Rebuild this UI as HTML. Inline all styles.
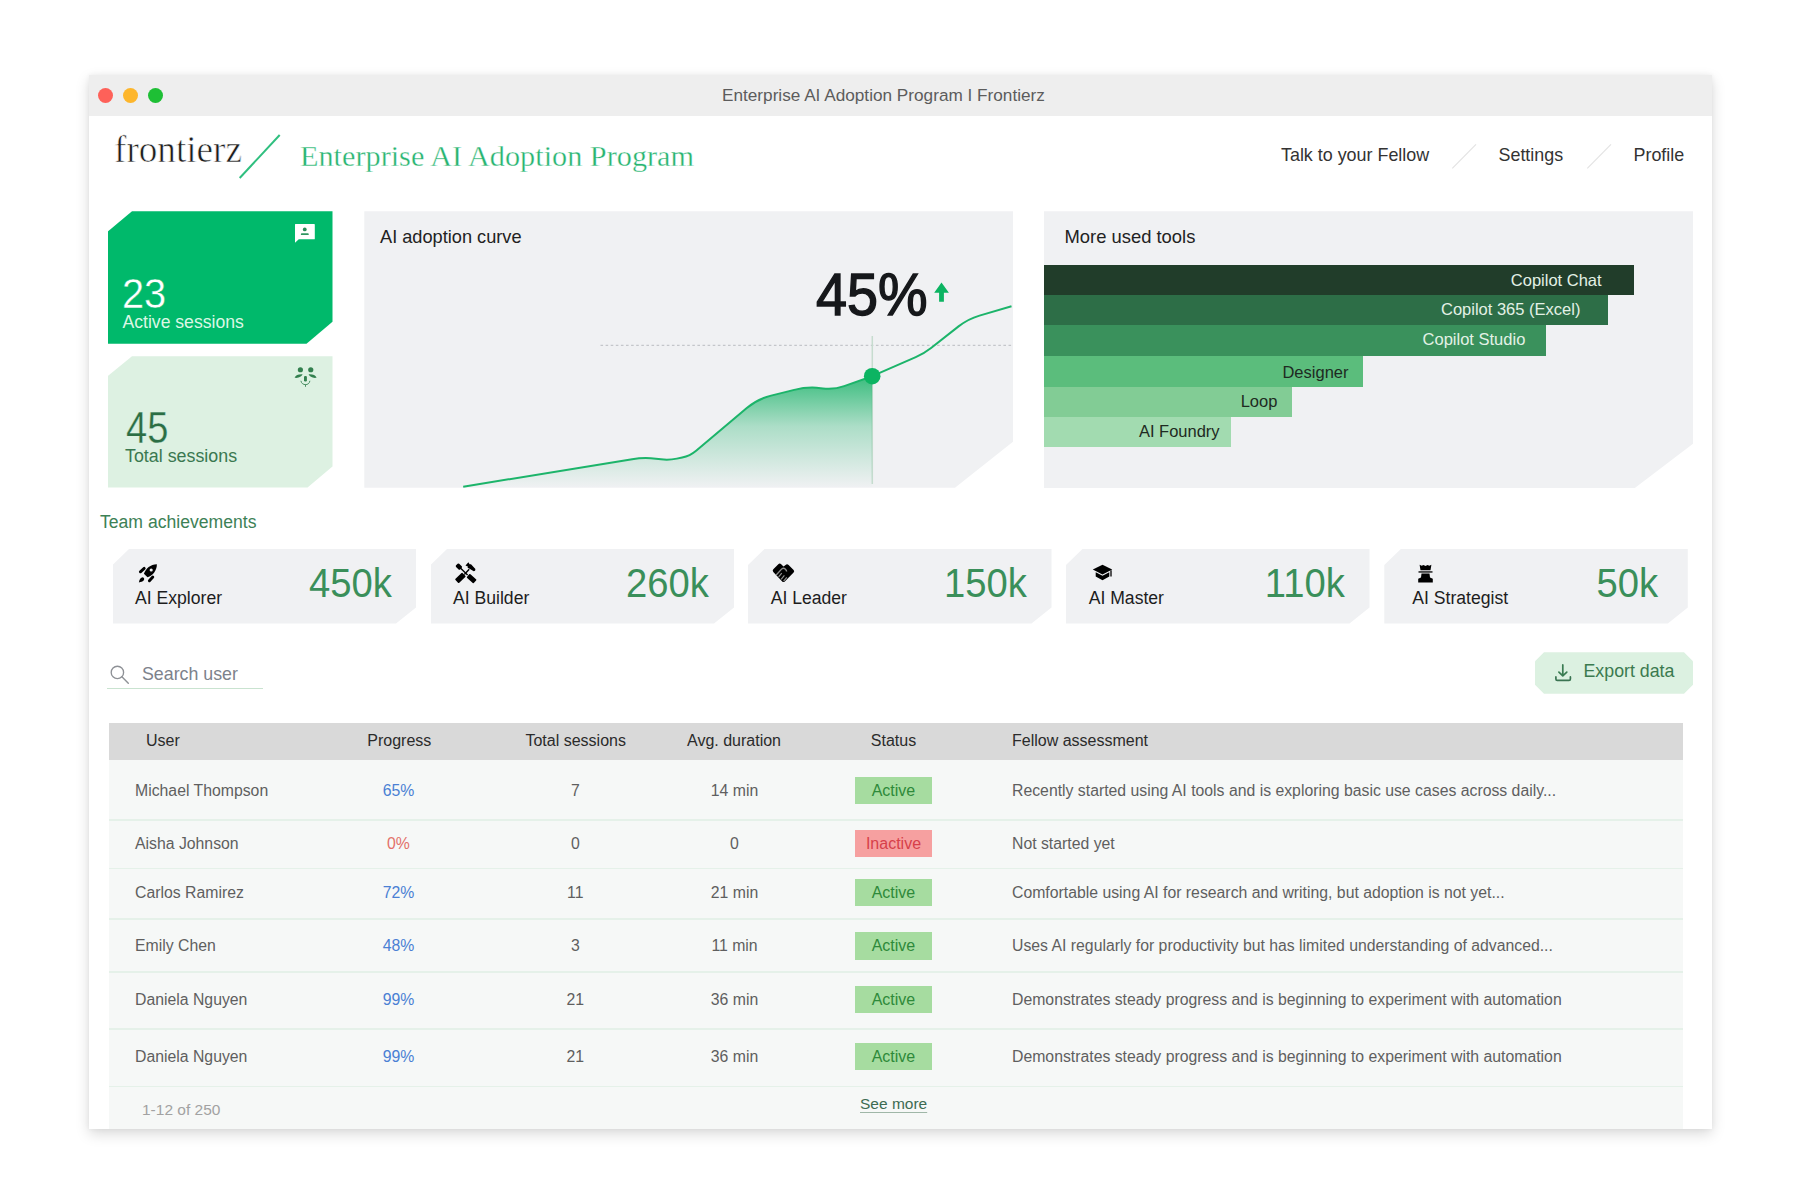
<!DOCTYPE html>
<html><head><meta charset="utf-8">
<style>
*{margin:0;padding:0;box-sizing:border-box}
html,body{width:1800px;height:1200px;background:#fff;overflow:hidden;font-family:"Liberation Sans",sans-serif}
.abs{position:absolute}
.t{position:absolute;white-space:nowrap;line-height:1}
#win{position:absolute;left:88.5px;top:75px;width:1623.5px;height:1053.5px;background:#fff;box-shadow:0 5px 13px rgba(0,0,0,0.15),0 0 5px rgba(0,0,0,0.05)}
#tb{position:absolute;left:88.5px;top:75px;width:1623.5px;height:41px;background:#eeeeee}
.dot{position:absolute;width:15px;height:15px;border-radius:50%;top:87.8px}
.th{font-size:16px;color:#2b2b2b;margin-top:1.5px}
.td{font-size:15.8px;color:#5f5f5f;margin-top:0.8px}
.c{transform:translateX(-50%)}
.b{color:#4a80d4}
.r{color:#e3716a}
.badge{font-size:16px;line-height:27.4px;text-align:center}
.act{background:#a6dca0;color:#2e8a3a}
.ina{background:#f6a0a0;color:#d7404a}
</style></head>
<body>
<div id="win"></div>
<div id="tb"></div>
<div class="dot" style="left:98.3px;background:#fe6159"></div>
<div class="dot" style="left:123px;background:#fdb62c"></div>
<div class="dot" style="left:147.8px;background:#1ebf35"></div>
<div class="t" id="title" style="left:722px;top:87px;font-size:17.2px;color:#5c5c5c">Enterprise AI Adoption Program I Frontierz</div>

<!-- header -->
<div class="t" id="logo" style="left:114px;top:130.8px;font-family:'Liberation Serif',serif;font-size:37.2px;color:#1e1e1e;-webkit-text-stroke:0.6px #fff">frontierz</div>
<svg class="abs" style="left:0;top:0" width="1800" height="1200">
<line x1="239.7" y1="178" x2="279.7" y2="135" stroke="#2fbf7f" stroke-width="2"/>
<line x1="1452.3" y1="168.3" x2="1476" y2="144.3" stroke="#e3e3e3" stroke-width="1.2"/>
<line x1="1587.3" y1="168.3" x2="1611" y2="144.3" stroke="#e3e3e3" stroke-width="1.2"/>
</svg>
<div class="t" id="prog" style="left:300px;top:141.2px;font-family:'Liberation Serif',serif;font-size:30.25px;color:#27b470;-webkit-text-stroke:0.35px #fff">Enterprise AI Adoption Program</div>
<div class="t" id="nav1" style="margin-top:1px;left:1281px;top:145.8px;font-size:17.9px;color:#333">Talk to your Fellow</div>
<div class="t" id="nav2" style="margin-top:1px;left:1498.5px;top:145.8px;font-size:17.9px;color:#333">Settings</div>
<div class="t" id="nav3" style="margin-top:1px;left:1633.5px;top:145.8px;font-size:17.9px;color:#333">Profile</div>

<!-- stat cards -->
<div class="abs" style="left:107.5px;top:211.25px;width:225px;height:132.5px;background:#00b96b;clip-path:polygon(24.5px 0,100% 0,100% calc(100% - 22px),calc(100% - 26px) 100%,0 100%,0 20.5px)"></div>
<svg class="abs" style="left:294px;top:223px" width="22" height="21" viewBox="0 0 22 21">
<path d="M1.5 1H20.2Q20.8 1 20.8 1.6V15.7Q20.8 16.3 20.2 16.3H4.8L1 19.8V1.5Q1 1 1.5 1Z" fill="#fff"/>
<circle cx="10.75" cy="6.4" r="1.9" fill="#2a8c5a"/>
<path d="M7.8 10.3H13.8Q14.8 10.3 14.8 11.2Q14.8 12.1 13.8 12.1H7.8Q6.8 12.1 6.8 11.2Q6.8 10.3 7.8 10.3Z" fill="#2f9661"/>
</svg>
<div class="t" id="n23" style="left:122.3px;top:273.4px;font-size:42.3px;color:#fff;-webkit-text-stroke:0.4px #00b96b;transform:scaleX(0.94);transform-origin:left top">23</div>
<div class="t" id="l23" style="left:122.5px;top:314.3px;font-size:17.6px;color:#dcf7e5">Active sessions</div>

<div class="abs" style="left:107.5px;top:356.25px;width:225px;height:131.25px;background:#ddf1e2;clip-path:polygon(24.5px 0,100% 0,100% calc(100% - 21px),calc(100% - 25px) 100%,0 100%,0 20px)"></div>
<svg class="abs" style="left:288px;top:362px" width="34" height="30" viewBox="0 0 34 30">
<circle cx="12.4" cy="7.75" r="2.6" fill="#33804f"/>
<circle cx="22.75" cy="7.75" r="2.6" fill="#33804f"/>
<path d="M6.6 15.8C7.5 13 10.5 12.1 14.6 12.3C13.4 14.6 11 16.4 6.6 15.8Z" fill="#33804f"/>
<path d="M28.6 15.8C27.7 13 24.7 12.1 20.6 12.3C21.8 14.6 24.2 16.4 28.6 15.8Z" fill="#33804f"/>
<rect x="16" y="13.9" width="2.9" height="5.6" rx="1.2" fill="#33804f"/>
<path d="M12.9 18.8C13.5 21.8 15.5 22.6 17.5 22.6C19.5 22.6 21.4 21.8 21.9 18.8M17.5 22.4V24.8" stroke="#4a8f63" stroke-width="1" fill="none"/>
</svg>
<div class="t" id="n45" style="left:125.8px;top:406.7px;font-size:43.5px;color:#2c6e44;-webkit-text-stroke:0.35px #ddf1e2;transform:scaleX(0.876);transform-origin:left top">45</div>
<div class="t" id="l45" style="left:125px;top:448px;font-size:17.85px;color:#3a7850">Total sessions</div>

<!-- chart panel -->
<div class="abs" style="left:364.3px;top:211.2px;width:648.7px;height:276.5px;background:#f0f1f3;clip-path:polygon(0 0,100% 0,100% calc(100% - 46px),calc(100% - 58px) 100%,0 100%)"></div>
<div class="t" id="chtitle" style="left:380px;top:228px;font-size:18.2px;color:#222">AI adoption curve</div>
<div class="t" id="pct" style="left:816.4px;top:265.5px;font-size:59px;color:#16181b;-webkit-text-stroke:1.4px #16181b;transform:scaleX(0.945);transform-origin:left top">45%</div>
<svg class="abs" style="left:0;top:0" width="1800" height="1200">
<defs>
<linearGradient id="ag" x1="0" y1="0" x2="0" y2="1">
<stop offset="0" stop-color="#1cb46a" stop-opacity="0.86"/>
<stop offset="0.45" stop-color="#1cb46a" stop-opacity="0.32"/>
<stop offset="1" stop-color="#1cb46a" stop-opacity="0"/>
</linearGradient>
</defs>
<line x1="600.5" y1="345.3" x2="1013" y2="345.3" stroke="#b9bcc0" stroke-width="1" stroke-dasharray="2.6 2.5"/>
<line x1="872.3" y1="336" x2="872.3" y2="484" stroke="#c6dccf" stroke-width="1.5"/>
<path d="M463.20 486.70 L632.16 459.23 Q644.00 457.30 655.91 458.73 L661.06 459.35 Q669.00 460.30 676.82 458.62 L682.18 457.48 Q690.00 455.80 696.12 450.65 L746.79 408.01 Q757.50 399.00 771.09 395.62 L794.21 389.88 Q807.80 386.50 820.80 388.15 L822.89 388.41 Q833.80 389.80 844.17 386.13 L872.20 376.20 L872.2 487.7 L463.2 487.7Z" fill="url(#ag)"/>
<path d="M463.20 486.70 L632.16 459.23 Q644.00 457.30 655.91 458.73 L661.06 459.35 Q669.00 460.30 676.82 458.62 L682.18 457.48 Q690.00 455.80 696.12 450.65 L746.79 408.01 Q757.50 399.00 771.09 395.62 L794.21 389.88 Q807.80 386.50 820.80 388.15 L822.89 388.41 Q833.80 389.80 844.17 386.13 L872.20 376.20 Q872.20 376.20 872.20 376.20 L915.76 357.11 Q924.00 353.50 931.08 347.95 L958.56 326.40 Q968.00 319.00 979.51 315.61 L1011.50 306.20" fill="none" stroke="#1cb46a" stroke-width="2" stroke-linejoin="round"/>
<circle cx="872.2" cy="376.2" r="8.3" fill="#0cb462"/>
<path d="M941.5 282.6 L948.9 292.8 L943.9 292.8 L943.9 301.8 L939.1 301.8 L939.1 292.8 L934.2 292.8 Z" fill="#0cb462"/>
</svg>

<!-- tools panel -->
<div class="abs" style="left:1044px;top:211.3px;width:649px;height:277px;background:#f0f1f3;clip-path:polygon(0 0,100% 0,100% calc(100% - 44.6px),calc(100% - 58.5px) 100%,0 100%)"></div>
<div class="t" id="tltitle" style="left:1064.5px;top:227.8px;font-size:18.4px;color:#222">More used tools</div>
<div class="abs bar" style="left:1044px;top:265px;width:589.7px;height:30.2px;background:#213d2a"></div>
<div class="abs bar" style="left:1044px;top:295.2px;width:564px;height:30.2px;background:#2d6e47"></div>
<div class="abs bar" style="left:1044px;top:325.4px;width:502.4px;height:30.2px;background:#3a915c"></div>
<div class="abs bar" style="left:1044px;top:355.6px;width:319.2px;height:31.4px;background:#5bbd7c"></div>
<div class="abs bar" style="left:1044px;top:387px;width:247.8px;height:30.2px;background:#82cc95"></div>
<div class="abs bar" style="left:1044px;top:417.2px;width:186.6px;height:30.2px;background:#a2dbb0"></div>
<div class="t tb" id="b1" style="right:198.4px;top:272px;font-size:16.5px;color:#e3f1e6">Copilot Chat</div>
<div class="t tb" id="b2" style="right:219.6px;top:301px;font-size:16.5px;color:#e3f1e6">Copilot 365 (Excel)</div>
<div class="t tb" id="b3" style="right:274.7px;top:331px;font-size:16.5px;color:#e3f1e6">Copilot Studio</div>
<div class="t tb" id="b4" style="right:451.5px;top:364px;font-size:16.5px;color:#1e2a22">Designer</div>
<div class="t tb" id="b5" style="right:522.6px;top:393px;font-size:16.5px;color:#1e2a22">Loop</div>
<div class="t tb" id="b6" style="right:580.4px;top:423px;font-size:16.5px;color:#1e2a22">AI Foundry</div>

<!-- achievements -->
<div class="t" id="teamach" style="left:100px;top:513.8px;font-size:17.6px;color:#3d8156">Team achievements</div>
<div class="abs" style="left:112.5px;top:548.6px;width:303.5px;height:75px;background:#f0f1f3;clip-path:polygon(17px 0,100% 0,100% calc(100% - 16px),calc(100% - 20px) 100%,0 100%,0 16.5px)"></div>
<svg class="abs" style="left:137px;top:562px" width="22" height="22" viewBox="0 0 22 22">
<path d="M19.9 2.2C13.5 2.3 8.6 6.6 6.9 11.7L10.5 15.3C15.6 13.6 19.8 8.8 19.9 2.2Z" fill="#000"/>
<circle cx="14.2" cy="8" r="1.55" fill="#f0f1f3"/>
<path d="M3.4 9.8L7.2 6.4" stroke="#000" stroke-width="2.9" stroke-linecap="round"/>
<path d="M12.4 18.8L15.8 15" stroke="#000" stroke-width="2.9" stroke-linecap="round"/>
<path d="M1.9 20.4C2.2 17.6 3.8 15.3 5.7 15.2C7.3 15.4 7.6 17.4 6.6 18.6C5.6 19.6 3.9 20.2 1.9 20.4Z" fill="#000"/>
</svg>
<div class="t albl" style="margin-top:2px;left:135.0px;top:588px;font-size:17.6px;color:#1d1d1d">AI Explorer</div>
<div class="t anum" style="right:1408.2px;top:563px;font-size:41px;color:#3a8f5a;transform:scaleX(0.932);transform-origin:right top">450k</div>
<div class="abs" style="left:430.5px;top:548.6px;width:303.5px;height:75px;background:#f0f1f3;clip-path:polygon(17px 0,100% 0,100% calc(100% - 16px),calc(100% - 20px) 100%,0 100%,0 16.5px)"></div>
<svg class="abs" style="left:448px;top:555px" width="34" height="35" viewBox="0 0 34 35">
<rect x="-2.9" y="-2.2" width="5.8" height="4.4" rx="1.1" transform="translate(10.9 11.6) rotate(45)" fill="#000"/>
<path d="M12.4 13.1L19.6 20" stroke="#000" stroke-width="1.4"/>
<rect x="-4.6" y="-2.5" width="9.2" height="5" rx="0.9" transform="translate(23.6 23.6) rotate(41)" fill="#000"/>
<path d="M21.2 14.3L16.3 19.4" stroke="#000" stroke-width="1.4"/>
<rect x="-5" y="-2.75" width="10" height="5.5" rx="0.9" transform="translate(12.4 22.9) rotate(-43)" fill="#000"/>
<path d="M20.4 7.3L21.6 9.3L23 9.3L27.4 14L27.1 15.75L25.7 16.3L21.6 13.7L19.5 12.8L20.1 11.7L17.5 10.5Z" fill="#000"/>
</svg>
<div class="t albl" style="margin-top:2px;left:453.0px;top:588px;font-size:17.6px;color:#1d1d1d">AI Builder</div>
<div class="t anum" style="right:1090.6px;top:563px;font-size:41px;color:#3a8f5a;transform:scaleX(0.932);transform-origin:right top">260k</div>
<div class="abs" style="left:748.0px;top:548.6px;width:303.5px;height:75px;background:#f0f1f3;clip-path:polygon(17px 0,100% 0,100% calc(100% - 16px),calc(100% - 20px) 100%,0 100%,0 16.5px)"></div>
<svg class="abs" style="left:766px;top:555px" width="34" height="35" viewBox="0 0 34 35">
<path d="M17.5 11.4L15.2 9.2Q13.7 7.9 12.3 9.2L7.3 14.3Q6.1 15.6 7.3 16.9L16.2 26.4Q17.5 27.7 18.8 26.4L27.6 17.6Q28.8 16.3 27.6 15L22.6 9.9Q21 8.5 19.6 9.9Z" fill="#000"/>
<path d="M10 20.2L15.3 14.4Q17.3 12.2 19.2 14Q20.6 15.3 20.6 16.5" stroke="#8f8f8f" stroke-width="1.4" fill="none"/>
<path d="M12.6 21.9L15.8 18.1M15.1 24.3L18.4 20.3M17.6 26.2L20.8 22.3" stroke="#8f8f8f" stroke-width="1.2" fill="none"/>
</svg>
<div class="t albl" style="margin-top:2px;left:770.7px;top:588px;font-size:17.6px;color:#1d1d1d">AI Leader</div>
<div class="t anum" style="right:772.8px;top:563px;font-size:41px;color:#3a8f5a;transform:scaleX(0.932);transform-origin:right top">150k</div>
<div class="abs" style="left:1066.0px;top:548.6px;width:303.5px;height:75px;background:#f0f1f3;clip-path:polygon(17px 0,100% 0,100% calc(100% - 16px),calc(100% - 20px) 100%,0 100%,0 16.5px)"></div>
<svg class="abs" style="left:1091.5px;top:564px" width="21" height="17" viewBox="0 0 21 17"><path d="M10.5 0.8L0.8 5.6L10.5 10.4L20.2 5.6Z" fill="#000"/><path d="M3.7 8.2V12.6L10.5 16.2L17.3 12.6V8.2L10.5 11.7Z" fill="#000"/><path d="M19 6.2V12.5" stroke="#000" stroke-width="1.3"/></svg>
<div class="t albl" style="margin-top:2px;left:1088.7px;top:588px;font-size:17.6px;color:#1d1d1d">AI Master</div>
<div class="t anum" style="right:454.7px;top:563px;font-size:41px;color:#3a8f5a;transform:scaleX(0.932);transform-origin:right top">110k</div>
<div class="abs" style="left:1384.3px;top:548.6px;width:303.5px;height:75px;background:#f0f1f3;clip-path:polygon(17px 0,100% 0,100% calc(100% - 16px),calc(100% - 20px) 100%,0 100%,0 16.5px)"></div>
<svg class="abs" style="left:1416.8px;top:564px" width="17" height="19" viewBox="0 0 17 19"><path d="M2.6 0.8L4.6 1.8L6.5 0.9L8.5 1.9L10.5 0.9L12.4 1.8L14.4 0.8L13.5 6.3H3.5Z" fill="#000"/><rect x="1.5" y="7.3" width="14" height="1.3" fill="#000"/><path d="M4.5 9.5H12.5L13 13.5L15.8 14.8V18.5H1.2V14.8L4 13.5Z" fill="#000"/></svg>
<div class="t albl" style="margin-top:2px;left:1412.3px;top:588px;font-size:17.6px;color:#1d1d1d">AI Strategist</div>
<div class="t anum" style="right:142.1px;top:563px;font-size:41px;color:#3a8f5a;transform:scaleX(0.932);transform-origin:right top">50k</div>

<!-- search / export -->
<svg class="abs" style="left:108px;top:662px" width="24" height="24" viewBox="0 0 24 24">
<circle cx="9.4" cy="10.4" r="6.2" stroke="#8e9196" stroke-width="1.35" fill="none"/>
<path d="M13.9 14.8L20.3 21.3" stroke="#8e9196" stroke-width="1.4" stroke-linecap="round"/>
</svg>
<div class="t" id="search" style="left:142px;top:666px;font-size:17.8px;color:#7d828b">Search user</div>
<div class="abs" style="left:107px;top:687.8px;width:155.5px;height:1px;background:#c9e3d0"></div>

<div class="abs" style="left:1535px;top:652.25px;width:158px;height:41.5px;background:#dcf1e1;clip-path:polygon(9px 0,calc(100% - 9px) 0,100% 9px,100% calc(100% - 9px),calc(100% - 9px) 100%,9px 100%,0 calc(100% - 9px),0 9px)"></div>
<svg class="abs" style="left:1553px;top:663px" width="20" height="20" viewBox="0 0 20 20">
<path d="M9.8 1.9V12.6M5.9 9.1L9.8 12.8L13.8 9.1" stroke="#3a7c52" stroke-width="1.7" stroke-linecap="round" stroke-linejoin="round" fill="none"/>
<path d="M2.9 13.9V15.9Q2.9 17.3 4.3 17.3H16Q17.4 17.3 17.4 15.9V13.9" stroke="#3a7452" stroke-width="1.7" stroke-linecap="round" fill="none"/>
</svg>
<div class="t" id="export" style="left:1583.5px;top:662.8px;font-size:17.8px;color:#3b7a4f">Export data</div>

<!-- table -->
<div class="abs" style="left:109.2px;top:722.6px;width:1574.3px;height:37.4px;background:#d9d9d9"></div>
<div class="abs" style="left:109.2px;top:760px;width:1574.3px;height:368.5px;background:#f6f8f7"></div>
<div class="abs" style="left:109.2px;top:819.35px;width:1574.3px;height:1.5px;background:#e5f1e9"></div>
<div class="abs" style="left:109.2px;top:867.65px;width:1574.3px;height:1.5px;background:#e5f1e9"></div>
<div class="abs" style="left:109.2px;top:918.35px;width:1574.3px;height:1.5px;background:#e5f1e9"></div>
<div class="abs" style="left:109.2px;top:971.45px;width:1574.3px;height:1.5px;background:#e5f1e9"></div>
<div class="abs" style="left:109.2px;top:1028.45px;width:1574.3px;height:1.5px;background:#e5f1e9"></div>
<div class="abs" style="left:109.2px;top:1085.75px;width:1574.3px;height:1.5px;background:#e5f1e9"></div>
<div class="t th" style="left:146px;top:731px">User</div>
<div class="t th c" style="left:399.3px;top:731px">Progress</div>
<div class="t th c" style="left:575.7px;top:731px">Total sessions</div>
<div class="t th c" style="left:734px;top:731px">Avg. duration</div>
<div class="t th c" style="left:893.5px;top:731px">Status</div>
<div class="t th" style="left:1012px;top:731px">Fellow assessment</div>
<div class="t td" style="left:135px;top:782.6px">Michael Thompson</div>
<div class="t td c b" style="left:398.5px;top:782.6px">65%</div>
<div class="t td c" style="left:575.3px;top:782.6px">7</div>
<div class="t td c" style="left:734.5px;top:782.6px">14 min</div>
<div class="abs badge act" style="left:855.4px;top:777.1px;width:76.2px;height:27.4px">Active</div>
<div class="t td" style="left:1012px;top:782.6px">Recently started using AI tools and is exploring basic use cases across daily...</div>
<div class="t td" style="left:135px;top:835.1px">Aisha Johnson</div>
<div class="t td c r" style="left:398.5px;top:835.1px">0%</div>
<div class="t td c" style="left:575.3px;top:835.1px">0</div>
<div class="t td c" style="left:734.5px;top:835.1px">0</div>
<div class="abs badge ina" style="left:855.4px;top:829.6px;width:76.2px;height:27.4px">Inactive</div>
<div class="t td" style="left:1012px;top:835.1px">Not started yet</div>
<div class="t td" style="left:135px;top:884.6px">Carlos Ramirez</div>
<div class="t td c b" style="left:398.5px;top:884.6px">72%</div>
<div class="t td c" style="left:575.3px;top:884.6px">11</div>
<div class="t td c" style="left:734.5px;top:884.6px">21 min</div>
<div class="abs badge act" style="left:855.4px;top:879.1px;width:76.2px;height:27.4px">Active</div>
<div class="t td" style="left:1012px;top:884.6px">Comfortable using AI for research and writing, but adoption is not yet...</div>
<div class="t td" style="left:135px;top:937.7px">Emily Chen</div>
<div class="t td c b" style="left:398.5px;top:937.7px">48%</div>
<div class="t td c" style="left:575.3px;top:937.7px">3</div>
<div class="t td c" style="left:734.5px;top:937.7px">11 min</div>
<div class="abs badge act" style="left:855.4px;top:932.2px;width:76.2px;height:27.4px">Active</div>
<div class="t td" style="left:1012px;top:937.7px">Uses AI regularly for productivity but has limited understanding of advanced...</div>
<div class="t td" style="left:135px;top:991.4px">Daniela Nguyen</div>
<div class="t td c b" style="left:398.5px;top:991.4px">99%</div>
<div class="t td c" style="left:575.3px;top:991.4px">21</div>
<div class="t td c" style="left:734.5px;top:991.4px">36 min</div>
<div class="abs badge act" style="left:855.4px;top:985.9px;width:76.2px;height:27.4px">Active</div>
<div class="t td" style="left:1012px;top:991.4px">Demonstrates steady progress and is beginning to experiment with automation</div>
<div class="t td" style="left:135px;top:1048.1px">Daniela Nguyen</div>
<div class="t td c b" style="left:398.5px;top:1048.1px">99%</div>
<div class="t td c" style="left:575.3px;top:1048.1px">21</div>
<div class="t td c" style="left:734.5px;top:1048.1px">36 min</div>
<div class="abs badge act" style="left:855.4px;top:1042.6px;width:76.2px;height:27.4px">Active</div>
<div class="t td" style="left:1012px;top:1048.1px">Demonstrates steady progress and is beginning to experiment with automation</div>
<div class="t" id="pg" style="left:142px;top:1102.3px;font-size:15.5px;color:#a2a2a2">1-12 of 250</div>
<div class="t" id="seemore" style="left:860px;top:1096px;font-size:15.5px;color:#3d6b52;text-decoration:underline;text-decoration-color:#9fb7a8;text-underline-offset:3px">See more</div>

</body></html>
